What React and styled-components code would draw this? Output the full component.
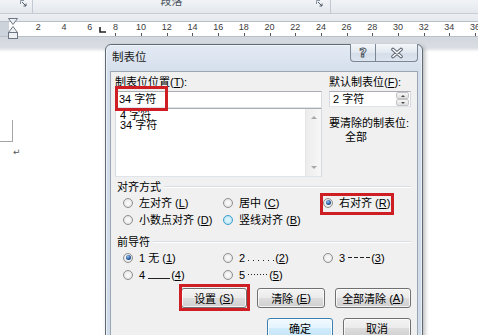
import React from 'react'
import styled, { createGlobalStyle, css } from 'styled-components'

const UI_FONT = '"Liberation Sans", "Noto Sans CJK SC", sans-serif'

const GlobalStyle = createGlobalStyle`
  html, body {
    margin: 0;
    padding: 0;
    background: #fff;
    overflow: hidden;
  }
  body {
    font-family: ${UI_FONT};
    font-size: 11px;
    color: #000;
  }
  * { box-sizing: border-box; }
`

const Screen = styled.div`
  position: relative;
  width: 478px;
  height: 335px;
  overflow: hidden;
  background: #fff;
`

/* ribbon */

const Ribbon = styled.div`
  display: flex;
  height: 14px;
  background: linear-gradient(#f1f3f6, #e4e8ed);
  border-bottom: 1px solid #c6cdd6;
`

const RibbonGroup = styled.div`
  position: relative;
  flex: ${p => (p.w ? 'none' : 1)};
  width: ${p => (p.w ? `${p.w}px` : 'auto')};
  display: flex;
  justify-content: center;
  border-right: ${p => (p.w ? '1px solid #c2c9d2' : 'none')};
`

const GroupLabel = styled.span`
  margin: -6px 20px 0 0;
  line-height: 14px;
  font-size: 11px;
  color: #4a5360;
`

const Launcher = styled.svg`
  position: absolute;
  top: 0;
  right: ${p => p.r}px;
`

function LauncherIcon({ r }) {
  return (
    <Launcher r={r} width="7" height="7" viewBox="0 0 7 7">
      <path d="M0.5 4V0.5H4" fill="none" stroke="#8a93a0" />
      <path d="M2 2L6 6M6 3.5V6H3.5" fill="none" stroke="#515b68" />
    </Launcher>
  )
}

/* ruler */

const RulerBar = styled.div`
  position: relative;
  height: 25px;
  padding-top: 7px;
  background: linear-gradient(#eceef2, #e2e6eb 40%, #d3d8df);
`

const RulerStrip = styled.div`
  display: flex;
  height: 16px;
  padding-left: 25.5px;
  background: linear-gradient(to right, #cdd3db 0 9px, #fff 9px);
  border-top: 1px solid #b9c0c9;
  border-bottom: 1px solid #b9c0c9;
`

const RulerCell = styled.div`
  position: relative;
  flex: none;
  width: 25.7px;
  text-align: center;
  font-family: "Liberation Sans", sans-serif;
  font-size: 9px;
  line-height: 10px;
  color: #3b3b3b;

  &::after {
    content: '';
    display: ${p => (p.tick ? 'block' : 'none')};
    position: absolute;
    left: 50%;
    bottom: 0;
    width: 1px;
    height: 3px;
    background: #555;
  }
`

const IndentMarker = styled.svg`
  position: absolute;
  left: 8px;
  top: 4px;
`

const TabMarker = styled.svg`
  position: absolute;
  left: 99px;
  top: 13px;
`

/* document page */

const Page = styled.div`
  height: 296px;
  padding-top: 81px;
  background: linear-gradient(#d3d8de, #dadee3 9px, #fff 13px);
`

const CornerMark = styled.div`
  width: 13px;
  height: 22px;
  border-right: 1px solid #a6a6a6;
  border-bottom: 1px solid #a6a6a6;
`

const ParaMark = styled.div`
  margin: 6px 0 0 13px;
  font-family: "DejaVu Sans", sans-serif;
  font-size: 9px;
  line-height: 9px;
  color: #555;
`

/* dialog window */

const Dialog = styled.div`
  position: absolute;
  left: 105px;
  top: 44px;
  width: 318px;
  height: 310px;
  display: flex;
  flex-direction: column;
  padding: 0 4px;
  border: 1px solid #5f6a77;
  border-radius: 6px 6px 0 0;
  background: linear-gradient(#e3eaf4, #d5dfec 26px, #d0dbe9);
  box-shadow: 2px 2px 4px rgba(0, 0, 0, 0.28), inset 0 0 0 1px rgba(255, 255, 255, 0.55);
`

const TitleBar = styled.div`
  flex: none;
  display: flex;
  align-items: flex-start;
  height: 26px;
`

const Title = styled.div`
  flex: 1;
  margin-top: 5px;
  padding-left: 2px;
  line-height: 14px;
  font-size: 11.5px;
  color: #1b1b1b;
`

const CaptionButton = styled.div`
  width: ${p => p.w}px;
  height: 18px;
  margin-top: -1px;
  display: flex;
  align-items: center;
  justify-content: center;
  background: linear-gradient(#f4f7fa, #e2e8f0 50%, #d4dde8 51%, #dde5ef);
  border: 1px solid #7b8795;
  border-top: none;
  border-left-width: ${p => (p.side === 'right' ? 0 : 1)}px;
  border-radius: ${p => (p.side === 'left' ? '0 0 0 4px' : '0 0 4px 0')};
`

const HelpGlyph = styled.span`
  font-family: "DejaVu Sans", sans-serif;
  font-weight: bold;
  font-size: 13px;
  line-height: 1;
  color: #fff;
  -webkit-text-stroke: 1px #4d5763;
`

const Panel = styled.div`
  flex: 1;
  padding: 3px 6px 0 4px;
  background: #f0f0f0;
  border: 1px solid #9aa6b4;
`

const TabArea = styled.div`
  display: grid;
  grid-template-columns: 207px 1fr;
  column-gap: 7px;
`

const Column = styled.div`
  display: flex;
  flex-direction: column;
`

const Label = styled.div`
  line-height: ${p => p.lh || 14}px;
  white-space: nowrap;
  padding-left: ${p => p.indent || 0}px;
  margin-top: ${p => p.gap || 0}px;
`

const Key = styled.span`
  text-decoration: underline;
  text-underline-offset: 1px;
`

const fieldBorder = css`
  border: 1px solid #abadb3;
  border-color: #abadb3 #d5d9e0 #dfe4ea #d5d9e0;
  background: #fff;
`

const TextBox = styled.div`
  position: relative;
  height: 17px;
  margin-top: 2px;
  padding-left: 3px;
  line-height: 15px;
  ${fieldBorder}
`

const InputMark = styled.span`
  position: absolute;
  left: -1px;
  top: -6px;
  width: 53px;
  height: 25px;
  border: 3px solid #cf1d24;
`

const ListBox = styled.div`
  display: flex;
  height: 69px;
  ${fieldBorder}
`

const ListItems = styled.div`
  flex: 1;
  padding: 1px 0 0 4px;
  line-height: 10px;
`

const ScrollBar = styled.div`
  width: 16px;
  display: flex;
  flex-direction: column;
  justify-content: space-between;
  background: linear-gradient(to right, #ececec, #f7f7f7);
  border-left: 1px solid #e4e4e4;
`

const ScrollArrow = styled.div`
  height: 17px;
  display: flex;
  align-items: center;
  justify-content: center;

  &::before {
    content: '';
    border-left: 3px solid transparent;
    border-right: 3px solid transparent;
    ${p => (p.down ? 'border-top' : 'border-bottom')}: 3px solid #a8a8a8;
  }
`

const SpinBox = styled.div`
  display: flex;
  height: 16px;
  margin-top: 2px;
  ${fieldBorder}
`

const SpinText = styled.div`
  flex: 1;
  padding-left: 3px;
  line-height: 14px;
`

const Spinner = styled.div`
  width: 13px;
  margin: 0 1px 0 0;
  display: flex;
  flex-direction: column;
`

const SpinButton = styled.div`
  flex: 1;
  display: flex;
  align-items: center;
  justify-content: center;
  background: linear-gradient(#f6f6f6, #dedede);
  border: 1px solid #c4c4c4;
  border-radius: 2px;

  &::before {
    content: '';
    border-left: 2.5px solid transparent;
    border-right: 2.5px solid transparent;
    ${p => (p.down ? 'border-top' : 'border-bottom')}: 2.5px solid #4a4a4a;
  }
`

const SectionTitle = styled.div`
  display: flex;
  align-items: center;
  gap: 3px;
  margin-top: ${p => p.gap}px;
  padding-left: 2px;
  line-height: 14px;

  &::after {
    content: '';
    flex: 1;
    border-top: 1px solid #d5dfe5;
    border-bottom: 1px solid #fff;
  }
`

const OptionGrid = styled.div`
  display: grid;
  grid-template-columns: 100px 100px 1fr;
  grid-auto-rows: 17px;
  padding-left: 8px;
  align-items: center;
  justify-items: start;
`

const redMark = css`
  &::after {
    content: '';
    position: absolute;
    border: 3px solid #cf1d24;
  }
`

const Option = styled.div`
  position: relative;
  display: flex;
  align-items: center;
  gap: 6px;
  height: 17px;
  white-space: nowrap;

  ${p => p.marked && css`
    ${redMark}
    &::after {
      left: -3px;
      right: -4px;
      top: -1px;
      bottom: -4px;
    }
  `}
`

const OptionText = styled.span`
  line-height: 14px;
`

const Radio = styled.span`
  position: relative;
  flex: none;
  width: 10px;
  height: 10px;
  border-radius: 50%;
  border: 1px solid ${p => (p.hover ? '#3c9ec9' : '#8f8f8f')};
  background: ${p => (p.hover
    ? 'radial-gradient(circle, #d9f2fb 0 30%, #a5dbf1 100%)'
    : 'radial-gradient(circle, #f7f7f7 0 30%, #d8d8d8 100%)')};

  ${p => p.checked && css`
    &::after {
      content: '';
      position: absolute;
      inset: 1.5px;
      border-radius: 50%;
      background: radial-gradient(circle at 40% 35%, #9cc3ec, #2459a0 55%, #0f3464);
    }
  `}
`

const LeaderSample = styled.span`
  display: inline-block;
  width: ${p => p.w}px;
  height: 1px;
  margin: 0 1px 0 3px;
  vertical-align: ${p => p.y}px;
  background: ${p => ({
    dot: 'repeating-linear-gradient(to right, #222 0 1px, transparent 1px 5px)',
    dash: 'repeating-linear-gradient(to right, #222 0 4px, transparent 4px 6px)',
    line: '#222',
    middot: 'repeating-linear-gradient(to right, #222 0 1px, transparent 1px 3px)',
  }[p.kind])};
`

const ButtonRow = styled.div`
  display: flex;
  justify-content: flex-end;
  gap: 10px;
  margin-top: ${p => p.top}px;
`

const Button = styled.div`
  position: relative;
  width: ${p => p.w}px;
  height: 20px;
  display: flex;
  align-items: center;
  justify-content: center;
  white-space: nowrap;
  border: 1px solid ${p => (p.primary ? '#3c7fb1' : '#707070')};
  border-radius: 3px;
  background: ${p => (p.primary
    ? 'linear-gradient(#f1f9fe, #e3f3fd 50%, #d0ebfb 51%, #c4e5f8)'
    : 'linear-gradient(#f3f3f3, #ebebeb 50%, #dddddd 51%, #cfcfcf)')};
  box-shadow: inset 0 0 0 1px rgba(255, 255, 255, 0.75);

  ${p => p.marked && css`
    ${redMark}
    &::after {
      left: -3px;
      right: -4px;
      top: -5px;
      bottom: -4px;
    }
  `}
`

const RULER_NUMBERS = [2, 4, 6, 8, 10, 12, 14, 16, 18, 20, 22, 24, 26, 28, 30, 32, 34, 36]

export default function App() {
  return (
    <Screen>
      <GlobalStyle />

      <Ribbon>
        <RibbonGroup w={33}>
          <LauncherIcon r={5} />
        </RibbonGroup>
        <RibbonGroup w={298}>
          <GroupLabel>段落</GroupLabel>
          <LauncherIcon r={7} />
        </RibbonGroup>
        <RibbonGroup />
      </Ribbon>

      <RulerBar>
        <RulerStrip>
          {RULER_NUMBERS.map(n => (
            <RulerCell key={n} tick={n >= 8}>{n}</RulerCell>
          ))}
        </RulerStrip>
        <IndentMarker width="10" height="21" viewBox="0 0 10 21">
          <path d="M0.5 0.5H9.5L5 6.5Z" fill="#eef1f4" stroke="#6d7783" />
          <path d="M5 8.5L9.5 14.5H0.5Z" fill="#eef1f4" stroke="#6d7783" />
          <rect x="0.5" y="14.5" width="9" height="6" fill="#eef1f4" stroke="#6d7783" />
        </IndentMarker>
        <TabMarker width="7" height="6" viewBox="0 0 7 6">
          <path d="M1 0V5H7" fill="none" stroke="#222" strokeWidth="1.6" />
        </TabMarker>
      </RulerBar>

      <Page>
        <CornerMark />
        <ParaMark>↵</ParaMark>
      </Page>

      <Dialog>
        <TitleBar>
          <Title>制表位</Title>
          <CaptionButton w={26} side="left">
            <HelpGlyph>?</HelpGlyph>
          </CaptionButton>
          <CaptionButton w={42} side="right">
            <svg width="16" height="12" viewBox="0 0 16 12">
              <path d="M4 2.5L12 9.5M12 2.5L4 9.5" stroke="#5e6874" strokeWidth="3.6" strokeLinecap="round" />
              <path d="M4 2.5L12 9.5M12 2.5L4 9.5" stroke="#fff" strokeWidth="1.6" strokeLinecap="round" />
            </svg>
          </CaptionButton>
        </TitleBar>

        <Panel>
          <TabArea>
            <Column>
              <Label>制表位位置(<Key>T</Key>):</Label>
              <TextBox>
                34 字符
                <InputMark />
              </TextBox>
              <ListBox>
                <ListItems>
                  <div>4 字符</div>
                  <div>34 字符</div>
                </ListItems>
                <ScrollBar>
                  <ScrollArrow />
                  <ScrollArrow down />
                </ScrollBar>
              </ListBox>
            </Column>
            <Column>
              <Label>默认制表位(<Key>F</Key>):</Label>
              <SpinBox>
                <SpinText>2 字符</SpinText>
                <Spinner>
                  <SpinButton />
                  <SpinButton down />
                </Spinner>
              </SpinBox>
              <Label gap={9}>要清除的制表位:</Label>
              <Label indent={16}>全部</Label>
            </Column>
          </TabArea>

          <SectionTitle gap={3}>对齐方式</SectionTitle>
          <OptionGrid>
            <Option><Radio /><OptionText>左对齐 (<Key>L</Key>)</OptionText></Option>
            <Option><Radio /><OptionText>居中 (<Key>C</Key>)</OptionText></Option>
            <Option marked><Radio checked /><OptionText>右对齐 (<Key>R</Key>)</OptionText></Option>
            <Option><Radio /><OptionText>小数点对齐 (<Key>D</Key>)</OptionText></Option>
            <Option><Radio hover /><OptionText>竖线对齐 (<Key>B</Key>)</OptionText></Option>
          </OptionGrid>

          <SectionTitle gap={7}>前导符</SectionTitle>
          <OptionGrid>
            <Option><Radio checked /><OptionText>1 无 (<Key>1</Key>)</OptionText></Option>
            <Option><Radio /><OptionText>2<LeaderSample kind="dot" w={26} y={1} />(<Key>2</Key>)</OptionText></Option>
            <Option><Radio /><OptionText>3<LeaderSample kind="dash" w={22} y={4} />(<Key>3</Key>)</OptionText></Option>
            <Option><Radio /><OptionText>4<LeaderSample kind="line" w={22} y={0} />(<Key>4</Key>)</OptionText></Option>
            <Option><Radio /><OptionText>5<LeaderSample kind="middot" w={20} y={4} />(<Key>5</Key>)</OptionText></Option>
          </OptionGrid>

          <ButtonRow top={5}>
            <Button w={66} marked>设置 (<Key>S</Key>)</Button>
            <Button w={68}>清除 (<Key>E</Key>)</Button>
            <Button w={76}>全部清除 (<Key>A</Key>)</Button>
          </ButtonRow>
          <ButtonRow top={10}>
            <Button w={66} primary>确定</Button>
            <Button w={68}>取消</Button>
          </ButtonRow>
        </Panel>
      </Dialog>
    </Screen>
  )
}
